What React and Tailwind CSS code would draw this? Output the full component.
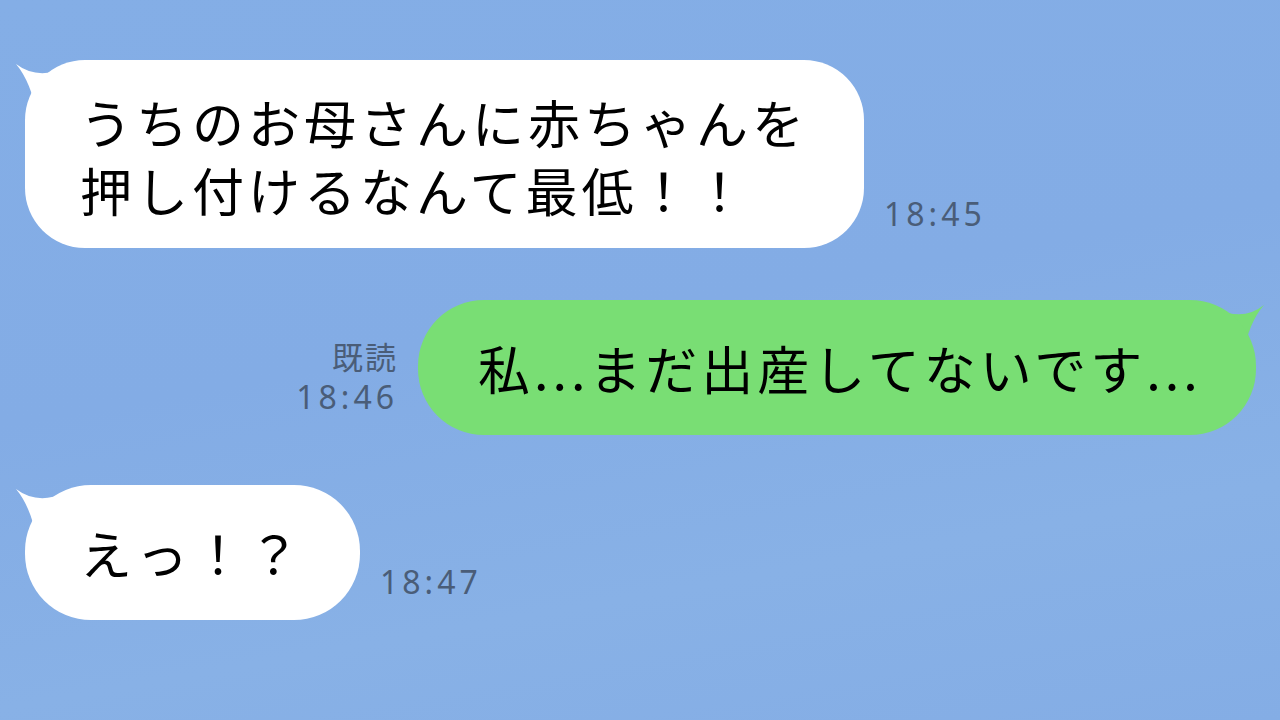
import React from "react";

const jp = { fontFamily: '"Noto Sans CJK JP", "Noto Sans", sans-serif' };
const ts = { fontFamily: '"Noto Sans", "Noto Sans CJK JP", sans-serif' };

function TailLeft({ fill }) {
  return (
    <svg className="absolute left-[-10px] top-0" width="70" height="60" viewBox="0 0 70 60">
      <path d="M1 4 Q22 20 50 8 L60 8 L60 55 L22 55 Q16 22 1 4 Z" fill={fill} />
    </svg>
  );
}

function TailRight({ fill }) {
  return (
    <svg className="absolute right-[-9px] top-0" width="70" height="60" viewBox="0 0 70 60">
      <path d="M69 5 Q48 22 20 8 L10 8 L10 55 L48 55 Q54 22 69 5 Z" fill={fill} />
    </svg>
  );
}

export default function App() {
  return (
    <div className="w-[1280px] h-[720px] overflow-hidden bg-[linear-gradient(170deg,#84aee6_0%,#83ace5_45%,#88b1e6_75%,#84ade5_100%)] flex flex-col">
      {/* Row 1 */}
      <div className="flex items-end mt-[60px] ml-[25px]">
        <div className="relative">
          <TailLeft fill="#ffffff" />
          <div
            className="relative bg-white rounded-[60px] pl-[55px] pr-[56px] pt-[28px] pb-[24px] text-[52px] leading-[68px] tracking-[4px] text-black"
            style={jp}
          >
            <div>うちのお母さんに赤ちゃんを</div>
            <div>押し付けるなんて最低！！</div>
          </div>
        </div>
        <div className="ml-[20px] mb-[16px] text-[32px] leading-[36px] tracking-[4px] text-[#4a5d78]" style={ts}>
          18:45
        </div>
      </div>

      {/* Row 2 */}
      <div className="flex items-end mt-[52px] ml-[292px]">
        <div className="w-[106px] flex flex-col items-end mb-[16px] text-[#4a5d78]">
          <div className="text-[31px] leading-[38px] tracking-[2px]" style={jp}>既読</div>
          <div className="text-[32px] leading-[44px] tracking-[4px]" style={ts}>18:46</div>
        </div>
        <div className="relative ml-[20px]">
          <TailRight fill="#79de74" />
          <div
            className="relative bg-[#79de74] rounded-[66px] pl-[60px] pr-[54px] pt-[34px] pb-[33px] text-[52px] leading-[68px] tracking-[4px] text-black"
            style={jp}
          >
            私...まだ出産してないです...
          </div>
        </div>
      </div>

      {/* Row 3 */}
      <div className="flex items-end mt-[50px] ml-[25px]">
        <div className="relative">
          <TailLeft fill="#ffffff" />
          <div
            className="relative bg-white rounded-[66px] pl-[55px] pr-[56px] pt-[34px] pb-[33px] text-[52px] leading-[68px] tracking-[4px] text-black"
            style={jp}
          >
            えっ！？
          </div>
        </div>
        <div className="ml-[20px] mb-[20px] text-[32px] leading-[36px] tracking-[4px] text-[#4a5d78]" style={ts}>
          18:47
        </div>
      </div>
    </div>
  );
}
